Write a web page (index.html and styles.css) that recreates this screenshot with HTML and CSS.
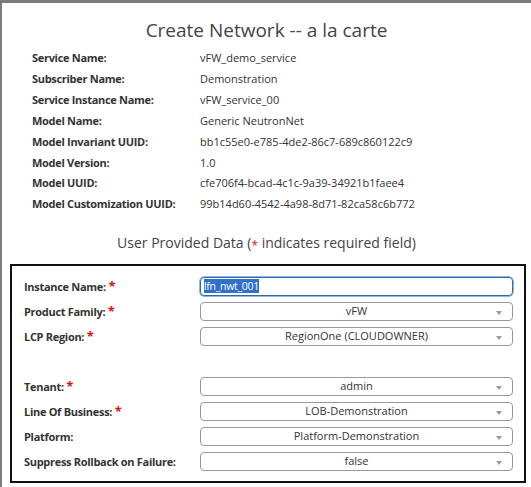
FILE: index.html
```html
<!DOCTYPE html>
<html>
<head>
<meta charset="utf-8">
<link rel="stylesheet" href="styles.css">
</head>
<body>
<div class="modal">
  <h1 class="title">Create Network -- a la carte</h1>
  <div class="info">
    <div class="lbl">Service Name:</div><div class="val">vFW_demo_service</div>
    <div class="lbl">Subscriber Name:</div><div class="val">Demonstration</div>
    <div class="lbl">Service Instance Name:</div><div class="val">vFW_service_00</div>
    <div class="lbl">Model Name:</div><div class="val">Generic NeutronNet</div>
    <div class="lbl">Model Invariant UUID:</div><div class="val">bb1c55e0-e785-4de2-86c7-689c860122c9</div>
    <div class="lbl">Model Version:</div><div class="val">1.0</div>
    <div class="lbl">Model UUID:</div><div class="val">cfe706f4-bcad-4c1c-9a39-34921b1faee4</div>
    <div class="lbl">Model Customization UUID:</div><div class="val">99b14d60-4542-4a98-8d71-82ca58c6b772</div>
  </div>
  <h2 class="subhead">User Provided Data (<span class="dash">*</span> indicates required field)</h2>
  <div class="formbox">
    <div class="row">
      <div class="flbl">Instance Name: <span class="req">*</span></div>
      <div class="input"><span class="sel">lfn_nwt_001</span></div>
    </div>
    <div class="row">
      <div class="flbl">Product Family: <span class="req">*</span></div>
      <div class="select">vFW<span class="arrow"></span></div>
    </div>
    <div class="row">
      <div class="flbl">LCP Region: <span class="req">*</span></div>
      <div class="select">RegionOne (CLOUDOWNER)<span class="arrow"></span></div>
    </div>
    <div class="row empty"></div>
    <div class="row">
      <div class="flbl">Tenant: <span class="req">*</span></div>
      <div class="select">admin<span class="arrow"></span></div>
    </div>
    <div class="row">
      <div class="flbl">Line Of Business: <span class="req">*</span></div>
      <div class="select">LOB-Demonstration<span class="arrow"></span></div>
    </div>
    <div class="row">
      <div class="flbl">Platform:</div>
      <div class="select">Platform-Demonstration<span class="arrow"></span></div>
    </div>
    <div class="row">
      <div class="flbl">Suppress Rollback on Failure:</div>
      <div class="select">false<span class="arrow"></span></div>
    </div>
  </div>
</div>
</body>
</html>
```
FILE: styles.css
```css
html, body {
  margin: 0;
  padding: 0;
  background: #7c7c7c;
  height: 100%;
  overflow: hidden;
}
.modal {
  margin: 3px 0 0 2px;
  background: #fff;
  height: 100%;
  font-family: "Open Sans", sans-serif;
  color: #333;
}
.title {
  margin: 0;
  padding-top: 15px;
  font-size: 19px;
  font-weight: 400;
  color: #444;
  text-align: center;
  line-height: 24px;
  height: 30px;
}
.info {
  display: grid;
  grid-template-columns: 168px 1fr;
  padding-left: 30px;
  row-gap: 0;
}
.lbl, .val {
  font-size: 11px;
  line-height: 20.9px;
}
.lbl {
  font-family: "Open Sans", sans-serif;
  font-weight: 700;
  letter-spacing: -0.3px;
}
.subhead {
  margin: 0;
  padding-top: 18px;
  font-size: 14px;
  font-weight: 400;
  color: #444;
  text-align: center;
  line-height: 20px;
  height: 31px;
}
.dash {
  color: #e02020;
  font-size: 12px;
  display: inline-block;
  vertical-align: -2px;
}
.formbox {
  margin: 0 5px 0 8px;
  border: 2px solid #111;
  padding: 10px 11px 10px 12px;
  display: flex;
  flex-direction: column;
  gap: 5px;
}
.row {
  display: flex;
  align-items: center;
  height: 20px;
}
.flbl {
  width: 176px;
  font-size: 11px;
  font-weight: 700;
  letter-spacing: -0.3px;
}
.req {
  color: #e01010;
  font-size: 13px;
}
.input, .select {
  flex: 1;
  height: 18px;
  box-sizing: border-box;
  border-radius: 4px;
  font-size: 11px;
  line-height: 16px;
}
.input {
  border: 1px solid #2b6cb0;
  box-shadow: 0 0 0 0.5px #2b6cb0;
  padding-left: 3px;
  height: 19px;
}
.sel {
  background: #2f70cc;
  color: #fff;
  font-size: 10.5px;
  letter-spacing: -0.3px;
}
.select {
  position: relative;
  border: 1px solid #999;
  text-align: center;
  height: 19px;
  color: #333;
}
.arrow {
  position: absolute;
  right: 10px;
  top: 8px;
  width: 0;
  height: 0;
  border-left: 3.5px solid transparent;
  border-right: 3.5px solid transparent;
  border-top: 4px solid #999;
}
```
